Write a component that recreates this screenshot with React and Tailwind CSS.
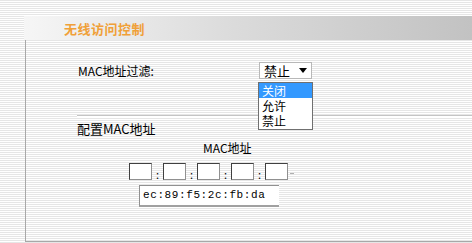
export default function App() {
  const cjk = { fontFamily: '"SimSun","Noto Sans CJK SC","Liberation Sans",sans-serif' };
  const boxes = [0, 1, 2, 3, 4];
  return (
    <div
      className="w-[472px] h-[243px] overflow-hidden pt-[16px] bg-[repeating-linear-gradient(to_bottom,#e6e6e6_0px,#e6e6e6_1px,#ffffff_1px,#ffffff_2px)] text-black"
      style={cjk}
    >
      <div className="ml-[24px] h-[24px] flex items-center bg-[linear-gradient(to_right,#f6f6f6,#dcdcdc_45%,#c2c2c2)]">
        <span className="ml-[40px] text-[13px] font-bold text-[#f0a038] leading-none tracking-[0.5px]">无线访问控制</span>
      </div>
      <div className="ml-[25px] h-[202px] border-l border-b border-[#a8a8a8] flex flex-col">
        <div className="mt-[22px] h-[17px] flex items-center pl-[52px]">
          <span className="w-[181px] text-[12px] leading-none">MAC地址过滤:</span>
          <div className="relative w-[53px] h-[17px] bg-white border border-[#b8b8b8] flex items-center justify-between pl-[4px] pr-[4px]">
            <span className="text-[13px] leading-[15px]">禁止</span>
            <svg width="8" height="5" viewBox="0 0 8 5"><path d="M0 0h8L4 5z" fill="#000" /></svg>
            <div className="absolute left-[-2px] top-[19px] w-[55px] h-[48px] bg-white border border-[#707070] flex flex-col text-[12px] z-10">
              <div className="h-[15px] flex items-center bg-[#3399ff] text-white pl-[3px]"><span className="leading-[12px]">关闭</span></div>
              <div className="h-[15px] flex items-center pl-[3px]"><span className="leading-[12px]">允许</span></div>
              <div className="h-[15px] flex items-center pl-[3px]"><span className="leading-[12px]">禁止</span></div>
            </div>
          </div>
        </div>
        <div className="mt-[36px] ml-[51px] h-[2px] border-t border-[#c4c4c4] bg-white" />
        <div className="mt-[4px] ml-[51px] h-[14px] flex items-center text-[13px] leading-none">配置MAC地址</div>
        <div className="mt-[7px] h-[12px] flex items-center pl-[177px] text-[12px] leading-none">MAC地址</div>
        <div className="mt-[9px] h-[17px] flex items-end pl-[103px]">
          {boxes.map((i) => (
            <div key={i} className="flex items-end">
              <div className="w-[23px] h-[17px] bg-white border border-[#404040] border-r-[#909090] border-b-[#909090]" />
              {i < 4 && <span className="w-[11px] text-center text-[11px] leading-[11px]">:</span>}
            </div>
          ))}
          <span className="ml-[2px] mb-[6px] w-[4px] h-[1px] bg-[#b0b0b0]" />
        </div>
        <div className="mt-[5px] ml-[113px] w-[140px] h-[22px] bg-white border-t border-l border-[#909090] border-b-2 border-b-[#a0a0a0] flex items-center pl-[3px]">
          <span className="text-[11px] leading-none tracking-[0.6px]" style={{ fontFamily: '"Liberation Mono",monospace' }}>ec:89:f5:2c:fb:da</span>
        </div>
      </div>
    </div>
  );
}
